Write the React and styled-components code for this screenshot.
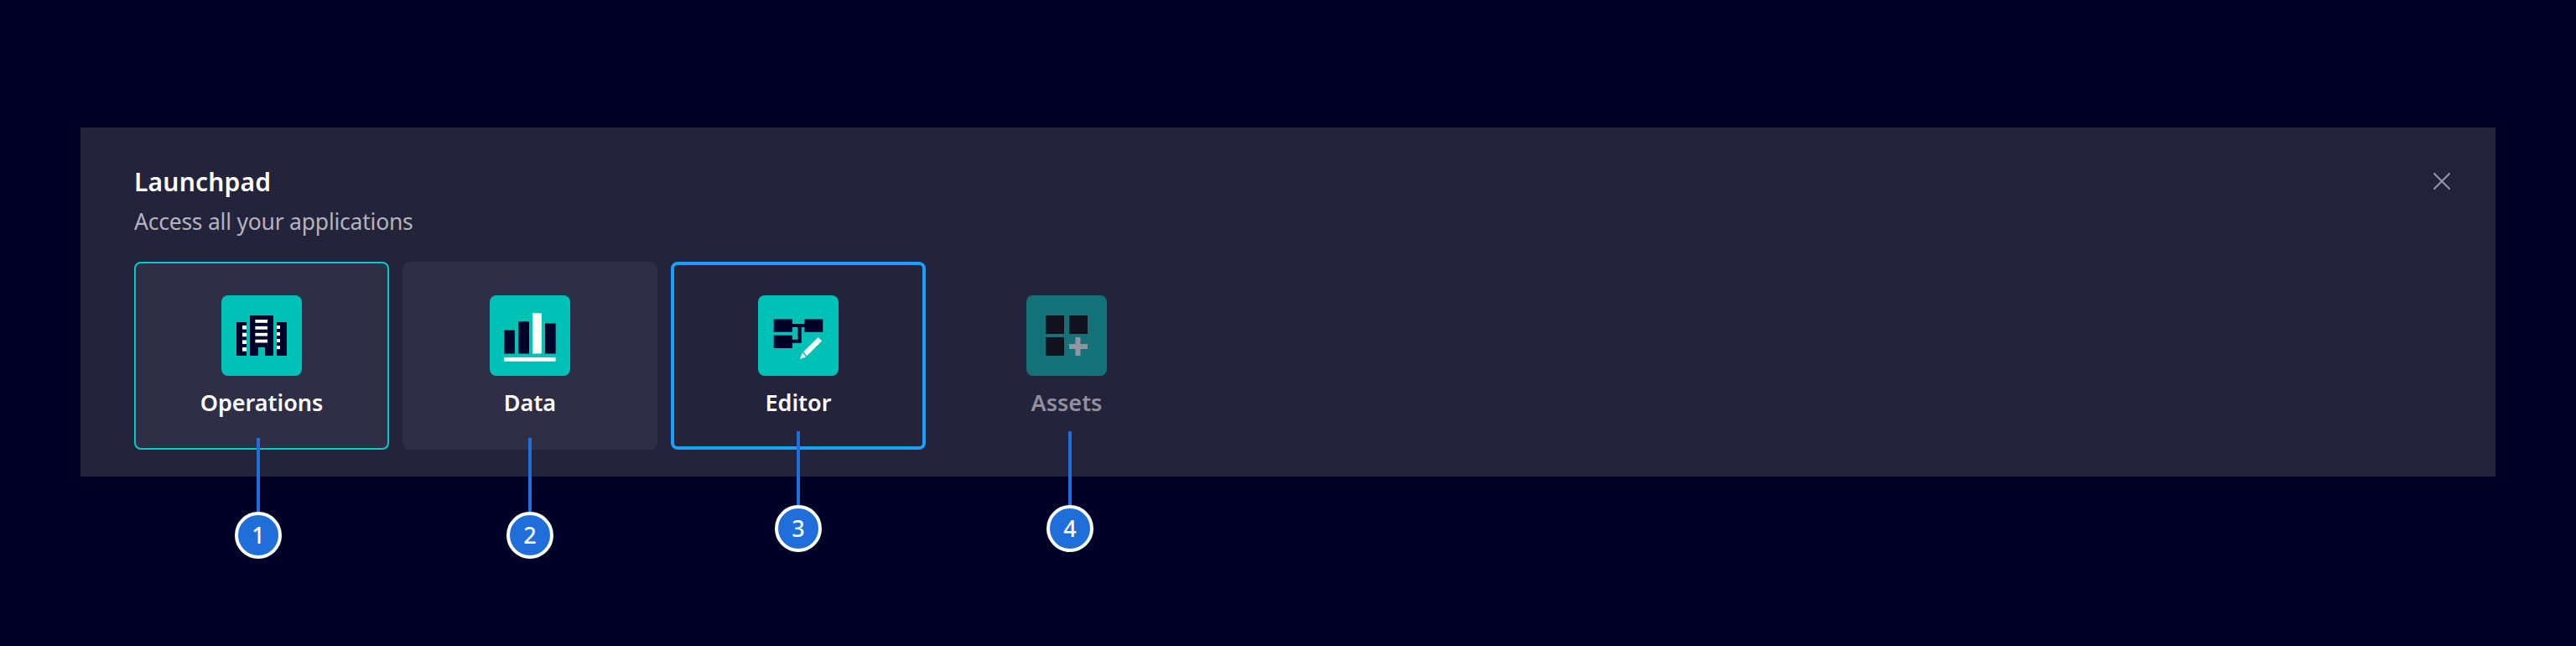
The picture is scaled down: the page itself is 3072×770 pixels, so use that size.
import React from "react";
import styled, { createGlobalStyle } from "styled-components";

const GlobalStyle = createGlobalStyle`
  *, *::before, *::after { box-sizing: border-box; }
  body { margin: 0; background: #000028; font-family: "Noto Sans", "Open Sans", sans-serif; }
`;

const Page = styled.main`
  min-height: 770px;
  padding: 152px 96px 0;
  background: #000028;
`;

const Panel = styled.section`
  height: 416px;
  padding: 44px 52px 32px 64px;
  background: #23233c;
  box-shadow: 0 0 4px rgba(0, 0, 0, 0.25), 0 4px 24px rgba(0, 0, 0, 0.2);
`;

const Header = styled.header`
  display: flex;
  justify-content: space-between;
  align-items: flex-start;
  height: 116px;
`;

const Title = styled.h1`
  margin: 0;
  font-size: 30px;
  font-weight: 600;
  line-height: 42px;
  letter-spacing: 0.2px;
  color: #ffffff;
`;

const Subtitle = styled.p`
  margin: 2px 0 0;
  font-size: 26.5px;
  line-height: 48px;
  letter-spacing: -0.23px;
  color: #b3b3be;
`;

const CloseButton = styled.button`
  display: grid;
  place-items: center;
  width: 24px;
  height: 24px;
  margin-top: 8px;
  padding: 0;
  border: 0;
  background: none;
`;

const CardRow = styled.div`
  display: flex;
  gap: 16px;
`;

const cardLooks = {
  active: "background: #2e2e46; border: 2px solid #00cccc;",
  hover: "background: #2e2e46; border: 2px solid #2e2e46;",
  focus: "background: #23233c; border: 4px solid #199fff;",
  disabled: "background: transparent; border: 2px solid transparent;",
};

const Card = styled.article`
  position: relative;
  display: flex;
  flex-direction: column;
  align-items: center;
  width: 304px;
  height: 224px;
  padding-top: ${(p) => (p.$look === "focus" ? 36 : 38)}px;
  border-radius: 8px;
  ${(p) => cardLooks[p.$look]}
`;

const AppIcon = styled.svg`
  display: block;
  width: 96px;
  height: 96px;
  border-radius: 8px;
  background: ${(p) => (p.$muted ? "#127278" : "#00c1b6")};
`;

const Label = styled.span`
  margin-top: 12px;
  font-size: 27px;
  font-weight: 600;
  line-height: 40px;
  white-space: nowrap;
  color: ${(p) => (p.$muted ? "#91919e" : "#ffffff")};
`;

const Marker = styled.div`
  position: absolute;
  top: ${(p) => p.$top}px;
  left: calc(50% + ${(p) => p.$shift}px);
  transform: translateX(-50%);
  display: flex;
  flex-direction: column;
  align-items: center;
`;

const MarkerLine = styled.span`
  width: 4px;
  height: 88px;
  background: #206ed9;
`;

const MarkerBadge = styled.span`
  width: 56px;
  height: 56px;
  border: 4px solid #ffffff;
  border-radius: 50%;
  background: #206ed9;
  color: #ffffff;
  font-size: 27px;
  font-weight: 500;
  line-height: 48px;
  text-align: center;
`;

const OperationsArt = () => (
  <>
    <path fill="#000028" d="M18 32h12v40H18zM34 24h28v48H52V62h-8v10H34zM66 32h12v40H66z" />
    <g fill="#fff">
      {[36, 44.7, 53.4, 62.1].map((y) => <rect key={y} x="25" y={y} width="5" height="4.6" />)}
      {[29, 36.9, 44.8, 52.7].map((y) => <rect key={y} x="40.4" y={y} width="14.6" height="3.8" />)}
      {[36, 44.1, 52.1, 60.2].map((y) => <rect key={y} x="66" y={y} width="4" height="4" />)}
    </g>
  </>
);

const DataArt = () => (
  <>
    <path fill="#000028" d="M17.3 41.4h12.6v28.2H17.3zM34.4 31.3H47v38.3H34.4zM66 33.4h12.7v36.2H66z" />
    <path fill="#fff" d="M51 21.2h10.8v48.4H51zM17.3 74h61.4v4.8H17.3z" />
  </>
);

const EditorArt = () => (
  <>
    <path fill="#000028" d="M18.7 28.6h22.1V34h14.4v-5.4h22.1v15.2H55.2V38h-3.5v18.7H40.8v6.2H18.7V47.8h22.1v4.9h6.5V38h-6.5v5.8H18.7z" />
    <path fill="#fff" d="M71.7 50l4.4 4.4L58.4 72 54 67.6zM52.7 68.7l4.7 4.6L50 76z" />
  </>
);

const AssetsArt = () => (
  <>
    <path fill="#12121e" d="M23 24h22v22H23zM51 24h22v22H51zM23 50h22v22H23z" />
    <path fill="#9393a1" d="M58.5 50h6v8H73v6h-8.5v8h-6v-8H51v-6h7.5z" />
  </>
);

const apps = [
  { name: "Operations", look: "active", Art: OperationsArt, top: 210, shift: -4 },
  { name: "Data", look: "hover", Art: DataArt, top: 210, shift: 0 },
  { name: "Editor", look: "focus", Art: EditorArt, top: 202, shift: 0 },
  { name: "Assets", look: "disabled", Art: AssetsArt, top: 202, shift: 4 },
];

const borderWidth = (look) => (look === "focus" ? 4 : 2);

export default function App() {
  return (
    <>
      <GlobalStyle />
      <Page>
        <Panel>
          <Header>
            <div>
              <Title>Launchpad</Title>
              <Subtitle>Access all your applications</Subtitle>
            </div>
            <CloseButton aria-label="Close">
              <svg width="24" height="24" viewBox="0 0 24 24" stroke="#9999a9" strokeWidth="2">
                <path d="M2.5 2.5l19 19M21.5 2.5l-19 19" />
              </svg>
            </CloseButton>
          </Header>
          <CardRow>
            {apps.map(({ name, look, Art, top, shift }, i) => (
              <Card key={name} $look={look}>
                <AppIcon viewBox="0 0 96 96" $muted={look === "disabled"}><Art /></AppIcon>
                <Label $muted={look === "disabled"}>{name}</Label>
                <Marker $top={top - borderWidth(look)} $shift={shift}>
                  <MarkerLine />
                  <MarkerBadge>{i + 1}</MarkerBadge>
                </Marker>
              </Card>
            ))}
          </CardRow>
        </Panel>
      </Page>
    </>
  );
}
